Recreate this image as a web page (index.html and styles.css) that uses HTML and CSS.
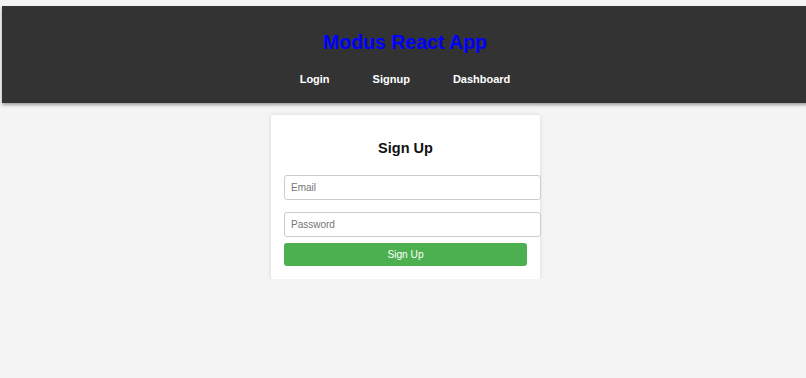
FILE: index.html
```html
<!DOCTYPE html>
<html lang="en">
<head>
    <meta charset="UTF-8">
    <meta name="viewport" content="width=device-width, initial-scale=1.0">
    <title>Modus React App</title>
    <link rel="stylesheet" href="styles.css">
</head>
<body>
    <header class="header">
        <h1 class="app-title">Modus React App</h1>
        <nav class="nav">
            <a href="#" class="nav-link">Login</a>
            <a href="#" class="nav-link">Signup</a>
            <a href="#" class="nav-link">Dashboard</a>
        </nav>
    </header>
    <main class="main">
        <form class="card">
            <h2 class="card-title">Sign Up</h2>
            <input class="field" type="email" placeholder="Email">
            <input class="field" type="password" placeholder="Password">
            <button class="submit-btn" type="button">Sign Up</button>
        </form>
    </main>
</body>
</html>
```

FILE: styles.css
```css
body {
    font-family: "Liberation Sans", Arial, sans-serif;
    margin: 0;
    background: #f4f4f4;
    overflow: hidden;
}
.header {
    margin: 6px 0 0 2px;
    width: 100%;
    height: 97px;
    box-sizing: border-box;
    padding-top: 24.5px;
    background: #333;
    box-shadow: 0 2px 3px rgba(0, 0, 0, 0.35);
    text-align: center;
}
.app-title {
    margin: 0;
    font-size: 19.5px;
    line-height: 23px;
    color: #0000ff;
}
.nav {
    display: flex;
    justify-content: center;
    gap: 43px;
    margin-top: 19px;
}
.nav-link {
    color: #fff;
    font-size: 11px;
    line-height: 13px;
    font-weight: bold;
    text-decoration: none;
}
.main {
    display: flex;
    justify-content: center;
    padding-top: 12px;
}
.card {
    display: flex;
    flex-direction: column;
    width: 243px;
    margin-left: 5px;
    padding: 24.5px 13px 13px;
    background: #fff;
    box-shadow: 0 0 4px rgba(0, 0, 0, 0.12);
    border-radius: 2px;
}
.card-title {
    margin: 0 0 18.5px;
    font-size: 14.5px;
    line-height: 17px;
    text-align: center;
    color: #111;
}
.field {
    width: 100%;
    height: 23px;
    padding: 0 6px;
    margin: 0 0 11.5px;
    border: 1px solid #ccc;
    border-radius: 3px;
    font-family: inherit;
    font-size: 10px;
    color: #333;
}
.field:last-of-type {
    margin-bottom: 6.5px;
}
.field::placeholder {
    color: #757575;
}
.submit-btn {
    height: 23px;
    padding: 0;
    border: none;
    border-radius: 3px;
    background: #4caf50;
    color: #fff;
    font-family: inherit;
    font-size: 10.2px;
    cursor: pointer;
}
```
